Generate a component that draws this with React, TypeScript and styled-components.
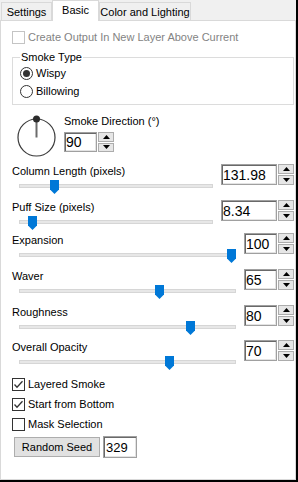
import React from "react";
import styled, { createGlobalStyle } from "styled-components";

const GlobalStyle = createGlobalStyle`
  html, body { margin: 0; padding: 0; background: #000; }
  body {
    width: 298px; height: 482px; overflow: hidden;
    font-family: "Liberation Sans", Arial, sans-serif;
    font-size: 11px; color: #000;
  }
  * { box-sizing: border-box; }
`;

const Window = styled.div`
  width: 296px;
  height: 480px;
  background: #f0f0f0;
  display: flex;
  flex-direction: column;
`;

const TabStrip = styled.div`
  height: 20px;
  flex: none;
  display: flex;
  align-items: flex-end;
  padding-left: 1px;
  position: relative;
  z-index: 1;
`;

const Tab = styled.div<{ $active?: boolean; $w: number }>`
  width: ${(p) => p.$w}px;
  height: ${(p) => (p.$active ? 21 : 18)}px;
  margin-bottom: ${(p) => (p.$active ? -1 : 0)}px;
  background: ${(p) => (p.$active ? "#fff" : "#f0f0f0")};
  border: 1px solid #d9d9d9;
  border-bottom: none;
  display: flex;
  align-items: center;
  justify-content: center;
  padding-bottom: ${(p) => (p.$active ? 3 : 0)}px;
  line-height: 14px;
  white-space: nowrap;
`;

const Panel = styled.div`
  flex: 1;
  background: #fff;
  border: 1px solid #d9d9d9;
  display: flex;
  flex-direction: column;
  padding: 0 1px 0 11px;
`;

const CheckRow = styled.label<{ $disabled?: boolean; $mt?: number }>`
  height: 13px;
  margin-top: ${(p) => p.$mt ?? 0}px;
  display: flex;
  align-items: center;
  gap: 3px;
  line-height: 13px;
  color: ${(p) => (p.$disabled ? "#838383" : "#000")};
  white-space: nowrap;
`;

const Box = styled.span<{ $disabled?: boolean }>`
  width: 13px;
  height: 13px;
  flex: none;
  border: 1px solid ${(p) => (p.$disabled ? "#c4c4c4" : "#333")};
  background: #fff;
  display: flex;
  align-items: center;
  justify-content: center;
`;

const Group = styled.fieldset`
  margin: 6px 0 0 0;
  padding: 3px 0 6px 7px;
  border: 1px solid #dcdcdc;
  min-inline-size: 0;
  display: flex;
  flex-direction: column;
  gap: 5px;
`;

const Legend = styled.legend`
  padding: 0 1px;
  line-height: 14px;
`;

const RadioRow = styled.label`
  height: 13px;
  display: flex;
  align-items: center;
  gap: 3px;
  line-height: 13px;
`;

const RadioCircle = styled.span<{ $on?: boolean }>`
  width: 13px;
  height: 13px;
  flex: none;
  border-radius: 50%;
  border: 1px solid #333;
  background: #fff;
  display: flex;
  align-items: center;
  justify-content: center;
  &::after {
    content: "";
    width: 7px;
    height: 7px;
    border-radius: 50%;
    background: #333;
    display: ${(p) => (p.$on ? "block" : "none")};
  }
`;

const DialRow = styled.div`
  margin-top: 9px;
  height: 44px;
  display: flex;
  gap: 6px;
`;

const DialSvg = styled.svg`
  margin-left: 2px;
  flex: none;
`;

const DialControls = styled.div`
  display: flex;
  flex-direction: column;
  gap: 4px;
`;

const Label = styled.div`
  line-height: 14px;
  height: 14px;
  white-space: nowrap;
`;

const SliderList = styled.div`
  margin-top: 6px;
  display: flex;
  flex-direction: column;
`;

const SliderRow = styled.div<{ $mt: number }>`
  margin-top: ${(p) => p.$mt}px;
  height: 30px;
  display: flex;
  gap: 8px;
  align-items: flex-start;
`;

const SliderCol = styled.div`
  flex: 1;
  display: flex;
  flex-direction: column;
`;

const TrackWrap = styled.div`
  margin-left: 7px;
  height: 16px;
  position: relative;
`;

const Track = styled.div`
  margin-top: 6px;
  height: 4px;
  background: #e7e7e7;
  border: 1px solid #d6d6d6;
`;

const Thumb = styled.svg`
  position: absolute;
  top: 2px;
`;

const Spin = styled.div<{ $w: number; $h: number }>`
  width: ${(p) => p.$w}px;
  height: ${(p) => p.$h}px;
  flex: none;
  display: flex;
  gap: 1px;
`;

const SpinField = styled.div<{ $size?: number }>`
  flex: 1;
  background: #fff;
  border: 1px solid #a0a0a0;
  box-shadow: inset 1px 1px 0 #696969, inset -1px -1px 0 #e3e3e3;
  padding-left: 1px;
  display: flex;
  align-items: center;
  font-family: "Liberation Sans", Arial, sans-serif;
  font-size: ${(p) => p.$size ?? 14}px;
  line-height: 1;
`;

const SpinButtons = styled.div`
  width: 16px;
  display: flex;
  flex-direction: column;
  gap: 1px;
`;

const SpinButton = styled.div`
  flex: 1;
  background: #e6e6e6;
  border: 1px solid #acacac;
  display: flex;
  align-items: center;
  justify-content: center;
`;

const ChecksList = styled.div`
  margin-top: 8px;
  display: flex;
  flex-direction: column;
  gap: 7px;
`;

const SeedRow = styled.div`
  margin-top: 5px;
  height: 22px;
  display: flex;
  align-items: center;
  gap: 3px;
`;

const Button = styled.button`
  margin-left: 2px;
  width: 86px;
  height: 20px;
  padding: 0;
  background: #e1e1e1;
  border: 1px solid #adadad;
  font: inherit;
  color: #000;
  line-height: 14px;
`;

const SeedField = styled(SpinField)`
  flex: none;
  width: 34px;
  height: 22px;
  padding-left: 2px;
`;

const Arrow = ({ up }: { up?: boolean }) => (
  <svg width="7" height="4" viewBox="0 0 7 4">
    <polygon points={up ? "0,4 7,4 3.5,0" : "0,0 7,0 3.5,4"} fill="#000" />
  </svg>
);

const SpinBox = ({ value, w, h = 21 }: { value: string; w: number; h?: number }) => (
  <Spin $w={w} $h={h}>
    <SpinField>{value}</SpinField>
    <SpinButtons>
      <SpinButton>
        <Arrow up />
      </SpinButton>
      <SpinButton>
        <Arrow />
      </SpinButton>
    </SpinButtons>
  </Spin>
);

const CheckMark = () => (
  <svg width="11" height="11" viewBox="0 0 11 11">
    <polyline points="1.5,5.5 4,8.2 9.5,2.2" fill="none" stroke="#333" strokeWidth="1.3" />
  </svg>
);

const sliders = [
  { label: "Column Length (pixels)", value: "131.98", frac: 0.168, wide: true, mt: 0 },
  { label: "Puff Size (pixels)", value: "8.34", frac: 0.049, wide: true, mt: 6 },
  { label: "Expansion", value: "100", frac: 1, wide: false, mt: 3 },
  { label: "Waver", value: "65", frac: 0.654, wide: false, mt: 6 },
  { label: "Roughness", value: "80", frac: 0.803, wide: false, mt: 6 },
  { label: "Overall Opacity", value: "70", frac: 0.702, wide: false, mt: 5 },
];

export default function App() {
  return (
    <>
      <GlobalStyle />
      <Window>
        <TabStrip>
          <Tab $w={51}>Settings</Tab>
          <Tab $w={47} $active>
            Basic
          </Tab>
          <Tab $w={92}>Color and Lighting</Tab>
        </TabStrip>
        <Panel>
          <CheckRow $disabled $mt={10}>
            <Box $disabled />
            Create Output In New Layer Above Current
          </CheckRow>

          <Group>
            <Legend>Smoke Type</Legend>
            <RadioRow>
              <RadioCircle $on />
              Wispy
            </RadioRow>
            <RadioRow>
              <RadioCircle />
              Billowing
            </RadioRow>
          </Group>

          <DialRow>
            <DialSvg width="44" height="44" viewBox="0 0 44 44">
              <circle cx="22.5" cy="23.5" r="18.5" fill="none" stroke="#3a3a3a" strokeWidth="1.2" />
              <line x1="22.5" y1="5" x2="22.5" y2="23.5" stroke="#6b6b6b" strokeWidth="2" />
              <circle cx="22.5" cy="5" r="3.5" fill="#2b2b2b" />
            </DialSvg>
            <DialControls>
              <Label>Smoke Direction (°)</Label>
              <SpinBox value="90" w={50} h={20} />
            </DialControls>
          </DialRow>

          <SliderList>
            {sliders.map((s) => (
              <SliderRow key={s.label} $mt={s.mt}>
                <SliderCol>
                  <Label>{s.label}</Label>
                  <TrackWrap>
                    <Track />
                    <Thumb
                      width="9"
                      height="14"
                      viewBox="0 0 9 14"
                      style={{ left: `calc(${s.frac} * (100% - 9px))` }}
                    >
                      <polygon points="0,0 9,0 9,9.5 4.5,14 0,9.5" fill="#0078d7" />
                    </Thumb>
                  </TrackWrap>
                </SliderCol>
                <SpinBox value={s.value} w={s.wide ? 73 : 50} />
              </SliderRow>
            ))}
          </SliderList>

          <ChecksList>
            <CheckRow>
              <Box>
                <CheckMark />
              </Box>
              Layered Smoke
            </CheckRow>
            <CheckRow>
              <Box>
                <CheckMark />
              </Box>
              Start from Bottom
            </CheckRow>
            <CheckRow>
              <Box />
              Mask Selection
            </CheckRow>
          </ChecksList>

          <SeedRow>
            <Button>Random Seed</Button>
            <SeedField $size={13}>329</SeedField>
          </SeedRow>
        </Panel>
      </Window>
    </>
  );
}
